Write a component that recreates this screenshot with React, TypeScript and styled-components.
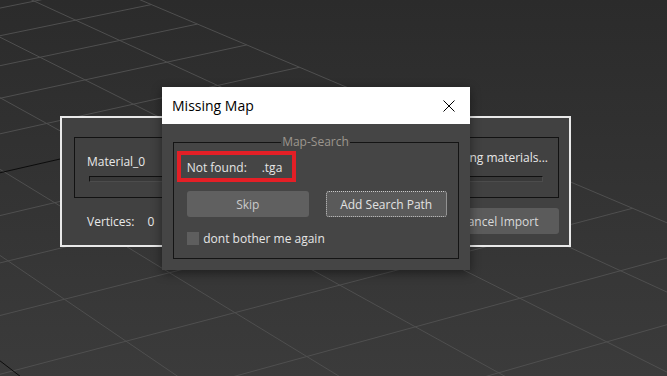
import React, { useMemo } from "react";
import styled, { createGlobalStyle } from "styled-components";

const GlobalStyle = createGlobalStyle`
  html, body {
    margin: 0;
    padding: 0;
    background: #2e2e2e;
  }
  body {
    font-family: "Open Sans", "Noto Sans", sans-serif;
    font-size: 12px;
  }
`;

// perspective of the home grid in the viewport
const VA = { x: -1225, y: -578 };
const VB = { x: 6000, y: -1200 };
const ORIGIN = { x: -189, y: 216 };
const G1 = 0.0161;
const G2 = 0.0408;

function project(u: number, v: number) {
  const w = G1 * u + G2 * v + 1;
  return {
    x: (G1 * u * VB.x + G2 * v * VA.x + ORIGIN.x) / w,
    y: (G1 * u * VB.y + G2 * v * VA.y + ORIGIN.y) / w,
  };
}

const Viewport = styled.div`
  position: relative;
  width: 667px;
  height: 376px;
  overflow: hidden;
  background: linear-gradient(#2b2b2b, #3b3b3b);
`;

const GridLayer = styled.svg`
  position: absolute;
  inset: 0;
`;

const ImportWindow = styled.div`
  position: absolute;
  left: 60px;
  top: 116px;
  width: 511px;
  height: 131px;
  box-sizing: border-box;
  border: 2px solid #e9e9e9;
  background: #414141;
  padding: 19px 10.5px 0 11.5px;
  display: flex;
  flex-direction: column;
  color: #e8e8e8;
`;

const ProgressGroup = styled.div`
  height: 61px;
  box-sizing: border-box;
  border: 1px solid #121212;
  display: flex;
  flex-direction: column;
`;

const StatusRow = styled.div`
  height: 20px;
  margin-top: 14px;
  padding: 0 9.5px 0 12.5px;
  display: flex;
  align-items: center;
  justify-content: space-between;
`;

const StatusText = styled.span<{ $raise?: boolean }>`
  line-height: 16px;
  margin-bottom: ${(p) => (p.$raise ? "8px" : "0")};
`;

const ProgressTrack = styled.div`
  height: 6px;
  margin: 3.5px 15px 0 14.5px;
  box-sizing: border-box;
  background: #393939;
  border-top: 1px solid #111;
  border-left: 1px solid #111;
  border-bottom: 1px solid #4c4c4c;
  border-right: 1px solid #4c4c4c;
`;

const FooterRow = styled.div`
  margin-top: 10px;
  height: 26px;
  display: flex;
  align-items: center;
  justify-content: space-between;
  padding-left: 13.5px;
`;

const CountLabel = styled.span`
  display: inline-block;
  width: 60.5px;
`;

const ImportButton = styled.button`
  width: 112px;
  height: 26px;
  border: none;
  border-radius: 3px;
  background: #5b5b5b;
  color: #d9d9d9;
  font: inherit;
  padding: 0;
  text-align: right;
  padding-right: 20px;
`;

const Modal = styled.div`
  position: absolute;
  left: 162px;
  top: 87px;
  width: 308px;
  height: 183px;
  background: #454545;
  box-shadow: 0 3px 10px rgba(0, 0, 0, 0.45);
  display: flex;
  flex-direction: column;
`;

const TitleBar = styled.div`
  height: 37px;
  flex: none;
  background: #ffffff;
  display: flex;
  align-items: center;
  justify-content: space-between;
  padding: 0 15px 0 10px;
  font-size: 14px;
  color: #000;
`;

const ModalBody = styled.div`
  padding: 10px 11.5px 0 10.5px;
`;

const GroupBox = styled.fieldset`
  margin: 0;
  padding: 0;
  height: 125px;
  box-sizing: border-box;
  border: 1px solid #141414;
  min-width: 0;
  color: #e6e6e6;
`;

const Legend = styled.legend`
  margin: 0 auto;
  padding: 0 1px;
  line-height: 16px;
  color: #9c968e;
`;

const Highlight = styled.div`
  margin: 1px 0 0 3.5px;
  width: 119px;
  height: 30.5px;
  box-sizing: border-box;
  border: 4px solid #e41f26;
  padding: 2px 0 0 5.7px;
  display: flex;
  align-items: center;
`;

const FieldName = styled.span`
  display: inline-block;
  width: 75px;
`;

const ButtonRow = styled.div`
  margin: 9.5px 0 0 13.2px;
  display: flex;
  gap: 16.7px;
`;

const DialogButton = styled.button<{ $focused?: boolean }>`
  width: ${(p) => (p.$focused ? "121px" : "122.3px")};
  height: 26px;
  padding: 0;
  border-radius: 3px;
  font: inherit;
  background: ${(p) => (p.$focused ? "#5a5a5a" : "#606060")};
  color: ${(p) => (p.$focused ? "#e2e2e2" : "#cbcbcb")};
  border: ${(p) => (p.$focused ? "1px dotted #c9c9c9" : "none")};
`;

const CheckRow = styled.label`
  margin: 14.7px 0 0 13.2px;
  display: flex;
  align-items: center;
  gap: 4px;
  line-height: 14px;
`;

const CheckBox = styled.span`
  width: 12.6px;
  height: 12.6px;
  background: #5e5e5e;
  flex: none;
`;

function HomeGrid() {
  const lines = useMemo(() => {
    const out: { a: { x: number; y: number }; b: { x: number; y: number }; axis: boolean; key: string }[] = [];
    for (let u = -8; u <= 6; u++) {
      out.push({ a: project(u, -8), b: project(u, 12), axis: u === 0, key: `u${u}` });
    }
    for (let v = -8; v <= 12; v++) {
      out.push({ a: project(-8, v), b: project(6, v), axis: v === 0, key: `v${v}` });
    }
    return out;
  }, []);

  return (
    <GridLayer width={667} height={376} viewBox="0 0 667 376">
      {lines
        .filter((l) => !l.axis)
        .map((l) => (
          <line key={l.key} x1={l.a.x} y1={l.a.y} x2={l.b.x} y2={l.b.y} stroke="#4f4f4f" strokeWidth={1} />
        ))}
      {lines
        .filter((l) => l.axis)
        .map((l) => (
          <line key={l.key} x1={l.a.x} y1={l.a.y} x2={l.b.x} y2={l.b.y} stroke="#0c0c0c" strokeWidth={1} />
        ))}
    </GridLayer>
  );
}

function CloseIcon() {
  return (
    <svg width="12" height="12" viewBox="0 0 12 12">
      <path d="M0.5 0.5 L11.5 11.5 M11.5 0.5 L0.5 11.5" stroke="#000" strokeWidth="1" fill="none" />
    </svg>
  );
}

export default function App() {
  return (
    <>
      <GlobalStyle />
      <Viewport>
        <HomeGrid />
        <ImportWindow>
          <ProgressGroup>
            <StatusRow>
              <StatusText>Material_0</StatusText>
              <StatusText $raise>Loading materials...</StatusText>
            </StatusRow>
            <ProgressTrack />
          </ProgressGroup>
          <FooterRow>
            <span>
              <CountLabel>Vertices:</CountLabel>0
            </span>
            <ImportButton>Cancel Import</ImportButton>
          </FooterRow>
        </ImportWindow>
        <Modal>
          <TitleBar>
            <span>Missing Map</span>
            <CloseIcon />
          </TitleBar>
          <ModalBody>
            <GroupBox>
              <Legend>Map-Search</Legend>
              <Highlight>
                <FieldName>Not found:</FieldName>
                <span>.tga</span>
              </Highlight>
              <ButtonRow>
                <DialogButton>Skip</DialogButton>
                <DialogButton $focused>Add Search Path</DialogButton>
              </ButtonRow>
              <CheckRow>
                <CheckBox />
                <span>dont bother me again</span>
              </CheckRow>
            </GroupBox>
          </ModalBody>
        </Modal>
      </Viewport>
    </>
  );
}
